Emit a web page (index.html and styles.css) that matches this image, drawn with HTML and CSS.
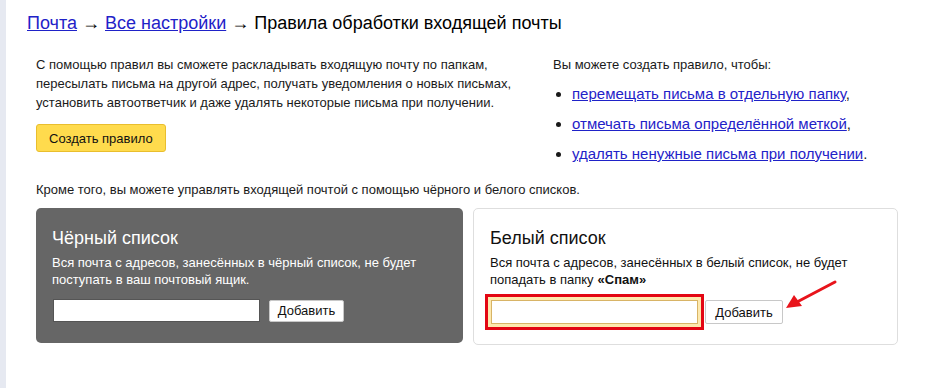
FILE: index.html
```html
<!DOCTYPE html>
<html lang="ru">
<head>
<meta charset="utf-8">
<title>Правила обработки входящей почты</title>
<link rel="stylesheet" href="styles.css">
</head>
<body>
<div class="page">
  <div class="strip"></div>
  <main class="main">
    <h1 class="title"><a href="#" class="link">Почта</a> → <a href="#" class="link">Все настройки</a> → Правила обработки входящей почты</h1>
    <div class="content">
      <section class="intro">
        <div class="intro-left">
          <p class="text">С помощью правил вы сможете раскладывать входящую почту по папкам, пересылать письма на другой адрес, получать уведомления о новых письмах, установить автоответчик и даже удалять некоторые письма при получении.</p>
          <button class="btn-yellow" type="button">Создать правило</button>
        </div>
        <div class="intro-right">
          <p class="text">Вы можете создать правило, чтобы:</p>
          <ul class="goals">
            <li><a href="#" class="link">перемещать письма в отдельную папку</a>,</li>
            <li><a href="#" class="link">отмечать письма определённой меткой</a>,</li>
            <li><a href="#" class="link">удалять ненужные письма при получении</a>.</li>
          </ul>
        </div>
      </section>
      <p class="text more">Кроме того, вы можете управлять входящей почтой с помощью чёрного и белого списков.</p>
      <section class="lists">
        <div class="card card-black">
          <h2 class="card-title">Чёрный список</h2>
          <p class="card-text">Вся почта с адресов, занесённых в чёрный список, не будет поступать в ваш почтовый ящик.</p>
          <div class="form">
            <input class="field field-black" type="text">
            <button class="btn-add btn-add-black" type="button">Добавить</button>
          </div>
        </div>
        <div class="card card-white">
          <h2 class="card-title">Белый список</h2>
          <p class="card-text">Вся почта с адресов, занесённых в белый список, не будет попадать в папку<b class="strong">«Спам»</b></p>
          <div class="form form-white">
            <input class="field field-white" type="text">
            <button class="btn-add btn-add-white" type="button">Добавить</button>
          </div>
        </div>
      </section>
    </div>
  </main>
</div>
<svg class="arrow" width="60" height="36" viewBox="0 0 60 36" aria-hidden="true">
  <line x1="52" y1="3" x2="14" y2="23" stroke="#e8141b" stroke-width="3" stroke-linecap="round"/>
  <polygon points="3,29 11,16 19,27" fill="#e8141b"/>
</svg>
</body>
</html>
```
FILE: styles.css
```css
html, body {
  margin: 0;
  padding: 0;
  background: #fff;
}
body {
  font-family: "Liberation Sans", Arial, sans-serif;
  color: #1a1a1a;
  position: relative;
  width: 936px;
  height: 388px;
  overflow: hidden;
}
.page {
  display: flex;
  min-height: 388px;
}
.strip {
  width: 6px;
  flex: none;
  background: #e6e9f1;
}
.main {
  flex: 1;
  padding: 12px 0 0 21px;
}
.title {
  margin: 0;
  font-size: 18px;
  line-height: 22px;
  font-weight: normal;
  color: #000;
}
.link {
  color: #1f22c8;
  text-decoration: underline;
}
.content {
  padding-left: 9px;
}
.intro {
  display: flex;
  margin-top: 21px;
}
.intro-left {
  width: 490px;
  margin-right: 27px;
}
.text {
  margin: 0;
  font-size: 13px;
  line-height: 19px;
  color: #1a1a1a;
}
.btn-yellow {
  margin-top: 12px;
  height: 28px;
  padding: 0 12px;
  font-family: inherit;
  font-size: 13px;
  color: #111;
  background: #ffdb4d;
  border: 1px solid #e9be2e;
  border-radius: 3px;
}
.goals {
  margin: 0;
  padding-left: 19px;
  font-size: 15px;
  line-height: 20px;
}
.goals li {
  margin-top: 10px;
}
.more {
  margin-top: 16px;
}
.lists {
  display: grid;
  grid-template-columns: 427px 425px;
  column-gap: 10px;
  align-items: start;
  margin-top: 9px;
}
.card {
  border-radius: 5px;
}
.card-black {
  background: #666;
  color: #fff;
  padding: 19px 16px 21px;
}
.card-white {
  background: #fff;
  border: 1px solid #dedede;
  padding: 18px 16px 20px;
  color: #111;
}
.card-title {
  margin: 0;
  font-size: 18px;
  line-height: 22px;
  font-weight: normal;
}
.card-text {
  margin: 5px 0 0;
  font-size: 13px;
  line-height: 17px;
}
.strong {
  font-weight: bold;
  margin-left: 4px;
}
.form {
  display: flex;
  align-items: center;
  margin-top: 11px;
}
.form-white {
  margin-top: 12px;
}
.field {
  box-sizing: border-box;
  width: 207px;
  margin: 0;
  padding: 0 4px;
  font-family: inherit;
  font-size: 13px;
  background: #fff;
}
.field-black {
  height: 23px;
  margin-left: 1px;
  border: 1px solid #555;
}
.field-white {
  height: 24px;
  margin-left: 1px;
  border: 1px solid #d8b466;
  box-shadow: 0 0 0 3px #fde9ae, 0 0 0 6px #e30613;
}
.btn-add {
  box-sizing: border-box;
  margin: 0;
  padding: 0;
  font-family: inherit;
  font-size: 13px;
  color: #111;
  background: #fff;
  border: 1px solid #c8c8c8;
  border-radius: 2px;
}
.btn-add-black {
  width: 75px;
  height: 22px;
  margin-left: 9px;
}
.btn-add-white {
  width: 78px;
  height: 24px;
  margin-left: 7px;
}
.arrow {
  position: absolute;
  left: 783px;
  top: 279px;
}
```
